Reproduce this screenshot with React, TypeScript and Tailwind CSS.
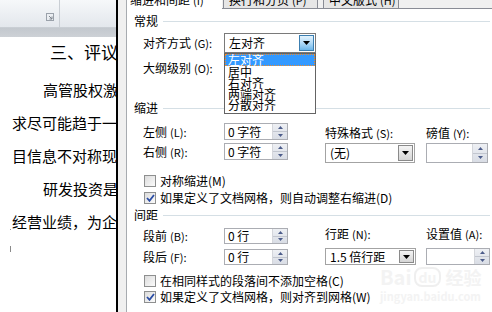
import React from "react";

const Tri = () => (
  <svg width="7" height="4" viewBox="0 0 7 4">
    <path d="M0 0h7L3.5 4z" fill="#000" />
  </svg>
);

function Spin({ text, cls }: { text?: string; cls: string }) {
  return (
    <div className={`flex border border-[#abadb3] bg-white ${cls}`}>
      <div className="flex-1 flex items-center pl-[3px] text-[12px] leading-[12px] whitespace-nowrap">{text}</div>
      <div className="w-[15px] flex flex-col border-l border-[#d4d6db] bg-gradient-to-b from-[#eef0f4] to-[#d9dde5]">
        <div className="flex-1 flex items-center justify-center border-b border-[#c2c6cf]">
          <svg width="5" height="3" viewBox="0 0 5 3"><path d="M0 3h5L2.5 0z" fill="#4c5c8a" /></svg>
        </div>
        <div className="flex-1 flex items-center justify-center">
          <svg width="5" height="3" viewBox="0 0 5 3"><path d="M0 0h5L2.5 3z" fill="#4c5c8a" /></svg>
        </div>
      </div>
    </div>
  );
}

function Select({ text, cls }: { text: string; cls: string }) {
  return (
    <div className={`flex border border-[#a3a3a3] bg-white p-[1px] ${cls}`}>
      <div className="flex-1 flex items-center pl-[3px] text-[12px] whitespace-nowrap">{text}</div>
      <div className="w-[15px] flex items-center justify-center border border-[#8a8a8a] bg-gradient-to-b from-[#f4f4f4] to-[#d5d5d5]">
        <Tri />
      </div>
    </div>
  );
}

function Check({ checked, label }: { checked?: boolean; label: string }) {
  return (
    <div className="flex items-center h-[13px] pl-[10px]">
      <div className="w-[12px] h-[12px] border border-[#8e8f8f] bg-gradient-to-br from-[#dcdcdc] to-[#fbfbfb] flex items-center justify-center">
        {checked && (
          <svg width="9" height="8" viewBox="0 0 9 8">
            <path d="M1 4l2.5 2.8L8 1" stroke="#2a4ca4" strokeWidth="1.8" fill="none" />
          </svg>
        )}
      </div>
      <span className="ml-[4px] text-[12px] whitespace-nowrap">{label}</span>
    </div>
  );
}

function Label({ main, key2, w }: { main: string; key2: string; w: string }) {
  return (
    <span className={`whitespace-nowrap text-[12px] ${w}`}>
      {main}
      <span className="ml-[3px] text-[11px]">({key2}):</span>
    </span>
  );
}

function Header({ text, cls }: { text: string; cls: string }) {
  return (
    <div className={`h-[14px] flex items-center ${cls}`}>
      <span className="text-[12px] leading-[14px]">{text}</span>
      <div className="ml-[5px] flex-1 h-px bg-[#d5dfe5]" />
    </div>
  );
}

export default function App() {
  return (
    <div className="w-[492px] h-[312px] flex overflow-hidden bg-white relative font-['Noto_Sans_CJK_SC','Noto_Sans',sans-serif] text-black">
      {/* document */}
      <div className="w-[116px] flex flex-col">
        <div className="h-[28px] flex bg-gradient-to-b from-[#f6f8fa] to-[#e3e7ec] border-b border-[#c9ced4]">
          <div className="w-[60px] border-r border-[#c9ced4] flex justify-end items-end pr-[5px] pb-[6px]">
            <svg width="8" height="8" viewBox="0 0 8 8">
              <rect x="0.5" y="0.5" width="7" height="7" fill="none" stroke="#9aa1aa" />
              <path d="M3 3l3 3M6 3.5V6H3.5" stroke="#7e858e" strokeWidth="1" fill="none" />
            </svg>
          </div>
          <div className="flex-1" />
        </div>
        <div className="h-[9px] bg-gradient-to-b from-[#c3c8ce] to-[#cdd1d6]" />
        <div className="flex-1 bg-white overflow-hidden relative whitespace-nowrap">
          <div className="h-[29px] leading-[29px] text-[17px] pl-[50px]">三、评议</div>
          <div className="mt-[7px] h-[33px] leading-[33px] text-[15px] pl-[43px]">高管股权激励</div>
          <div className="h-[33px] leading-[33px] text-[15px] pl-[12px]">求尽可能趋于一致</div>
          <div className="h-[33px] leading-[33px] text-[15px] pl-[12px]">目信息不对称现象</div>
          <div className="h-[33px] leading-[33px] text-[15px] pl-[43px]">研发投资是企业</div>
          <div className="h-[33px] leading-[33px] text-[15px] pl-[12px]">经营业绩，为企业</div>
          <div className="mt-[8px] ml-[10px] w-px h-[6px] bg-[#8a8a8a]" />
          <div className="absolute left-[10px] top-[192px] w-px h-px bg-[#9a9a9a]" />
        </div>
      </div>
      <div className="w-[2px] bg-black" />
      {/* dialog */}
      <div className="flex-1 flex bg-[#f0f0f0] pl-[8px]">
        <div className="flex-1 flex flex-col border-l border-[#a7abb0]">
          <div className="h-[9px] flex overflow-hidden text-[12px] leading-[14px]">
            <div className="w-[95px] bg-white overflow-hidden">
              <div className="-mt-[7px] pl-[3px] whitespace-nowrap">缩进和间距<span className="ml-[3px] text-[11px]">(I)</span></div>
            </div>
            <div className="w-px border-b border-[#898c95] bg-[#f0f0f0]" />
            <div className="w-[95px] border-x border-b border-[#898c95] bg-[#e6e6e6] overflow-hidden">
              <div className="-mt-[7px] pl-[5px] whitespace-nowrap">换行和分页<span className="ml-[3px] text-[11px]">(P)</span></div>
            </div>
            <div className="w-[5px] border-b border-[#898c95] bg-[#f0f0f0]" />
            <div className="w-[76px] border-x border-b border-[#898c95] bg-[#e6e6e6] overflow-hidden">
              <div className="-mt-[7px] pl-[5px] whitespace-nowrap">中文版式<span className="ml-[3px] text-[11px]">(H)</span></div>
            </div>
            <div className="flex-1 border-b border-[#898c95] bg-[#f0f0f0]" />
          </div>
          <div className="flex-1 bg-white flex flex-col pl-[7px] pr-[2px] text-[12px]">
            <Header text="常规" cls="mt-[5px]" />
            <div className="mt-[5px] h-[20px] flex items-center pl-[9px]">
              <Label main="对齐方式" key2="G" w="w-[81px]" />
              <div className="relative w-[92px] h-full">
                <div className="h-full flex border border-[#7a7a7a] bg-white p-[1px]">
                  <div className="flex-1 flex items-center pl-[3px]">左对齐</div>
                  <div className="w-[15px] flex items-center justify-center border border-[#3c7fb1] bg-gradient-to-b from-[#e3f3fd] via-[#b2dbf7] to-[#6cb6e9]">
                    <Tri />
                  </div>
                </div>
                <div className="absolute left-0 top-full w-full h-[61px] border border-[#646464] bg-white flex flex-col z-10 text-[12px] leading-[12px]">
                  <div className="h-[12px] bg-[#3399ff] text-white pl-[2px] border border-dotted border-[#f08c2c] leading-[10px]">左对齐</div>
                  <div className="h-[11px] pl-[3px]">居中</div>
                  <div className="h-[11px] pl-[3px]">右对齐</div>
                  <div className="h-[11px] pl-[3px]">两端对齐</div>
                  <div className="h-[11px] pl-[3px]">分散对齐</div>
                </div>
              </div>
            </div>
            <div className="mt-[7px] h-[16px] flex items-center pl-[9px]">
              <Label main="大纲级别" key2="O" w="w-[81px]" />
            </div>
            <Header text="缩进" cls="mt-[25px]" />
            <div className="flex pl-[9px] h-[48px]">
              <div className="w-[182px] flex flex-col">
                <div className="mt-[8px] h-[17px] flex items-center">
                  <Label main="左侧" key2="L" w="w-[81px]" />
                  <Spin text="0 字符" cls="w-[64px] h-full" />
                </div>
                <div className="mt-[3px] h-[17px] flex items-center">
                  <Label main="右侧" key2="R" w="w-[81px]" />
                  <Spin text="0 字符" cls="w-[64px] h-full" />
                </div>
              </div>
              <div className="flex flex-col">
                <div className="mt-[11px] h-[14px] flex items-center">
                  <Label main="特殊格式" key2="S" w="w-[101px]" />
                  <Label main="磅值" key2="Y" w="" />
                </div>
                <div className="mt-[3px] h-[20px] flex">
                  <Select text="(无)" cls="w-[90px] h-full" />
                  <Spin cls="ml-[11px] w-[62px] h-full" />
                </div>
              </div>
            </div>
            <div className="mt-[11px]">
              <Check label="对称缩进(M)" />
            </div>
            <div className="mt-[4px]">
              <Check checked label="如果定义了文档网格，则自动调整右缩进(D)" />
            </div>
            <Header text="间距" cls="mt-[4px]" />
            <div className="flex pl-[9px] h-[43px]">
              <div className="w-[182px] flex flex-col">
                <div className="mt-[6px] h-[16px] flex items-center">
                  <Label main="段前" key2="B" w="w-[81px]" />
                  <Spin text="0 行" cls="w-[64px] h-full" />
                </div>
                <div className="mt-[5px] h-[16px] flex items-center">
                  <Label main="段后" key2="F" w="w-[81px]" />
                  <Spin text="0 行" cls="w-[64px] h-full" />
                </div>
              </div>
              <div className="flex flex-col">
                <div className="mt-[5px] h-[14px] flex items-center">
                  <Label main="行距" key2="N" w="w-[101px]" />
                  <Label main="设置值" key2="A" w="" />
                </div>
                <div className="mt-[7px] h-[17px] flex">
                  <Select text="1.5 倍行距" cls="w-[91px] h-full" />
                  <Spin cls="ml-[10px] w-[64px] h-full" />
                </div>
              </div>
            </div>
            <div className="mt-[9px]">
              <Check label="在相同样式的段落间不添加空格(C)" />
            </div>
            <div className="mt-[3px]">
              <Check checked label="如果定义了文档网格，则对齐到网格(W)" />
            </div>
          </div>
        </div>
      </div>
      {/* watermark */}
      <div className="absolute left-[380px] top-[266px] flex flex-col items-start pointer-events-none opacity-60">
        <div className="flex items-center text-[20px] leading-[22px] font-bold text-[#ececec]">
          <span>Bai</span>
          <span className="ml-[2px] px-[3px] rounded-[8px] border-2 border-[#e6e6e6] text-[14px] leading-[16px]">du</span>
          <span className="ml-[4px] text-[18px]">经验</span>
        </div>
        <div className="mt-[2px] text-[11px] leading-[12px] font-bold text-[#ececec]">jingyan.baidu.com</div>
      </div>
    </div>
  );
}
